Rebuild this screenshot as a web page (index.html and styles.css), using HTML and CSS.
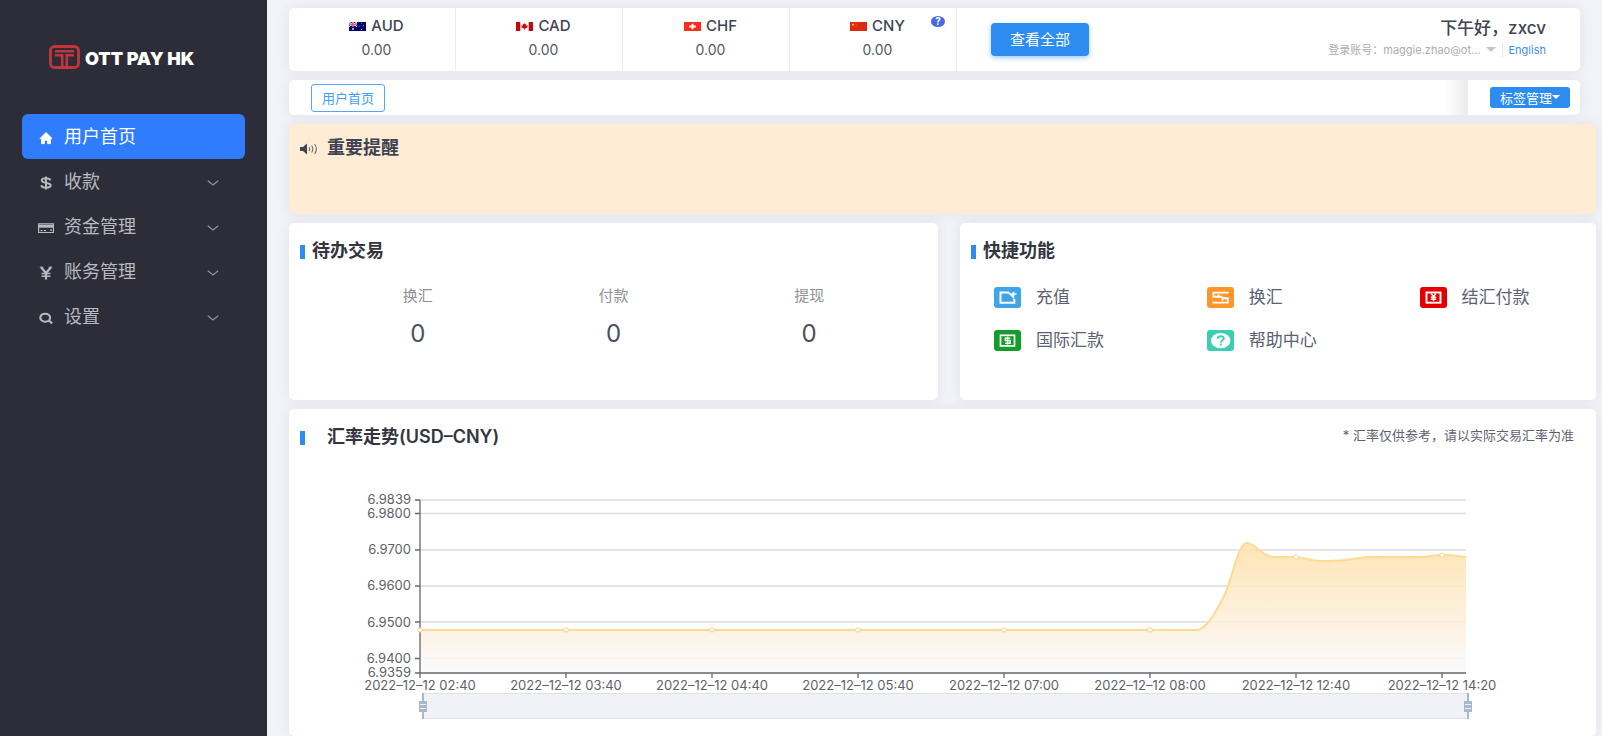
FILE: index.html
```html
<!DOCTYPE html>
<html lang="zh-CN">
<head>
<meta charset="utf-8">
<title>OTT PAY HK</title>
<link rel="stylesheet" href="styles.css">
</head>
<body>
<div class="layout">
  <aside class="sidebar">
    <div class="brand">
      <svg class="brand-mark" viewBox="0 0 31 24" fill="none" stroke="#c2363a">
        <rect x="1.5" y="1.5" width="28" height="21" rx="4" stroke-width="2.8"/>
        <path d="M6 6.200h19M6 10.200h7.200v11.500M25 10.200h-7.200v11.500" stroke-width="2.500"/>
      </svg>
      <span class="brand-name">OTT PAY HK</span>
    </div>
    <nav class="menu">
      <a class="menu-item active" href="#">
        <svg class="menu-icon" viewBox="0 0 16 14" fill="currentColor"><path d="M8 1.500 14 7.600h-1.600v5H9.600V9.200H6.400v3.400H3.600v-5H2z" stroke="currentColor" stroke-linejoin="round"/></svg>
        <span>用户首页</span>
      </a>
      <a class="menu-item" href="#">
        <svg class="menu-icon" viewBox="0 0 16 14" fill="none" stroke="currentColor" stroke-width="2"><path d="M12.500 4.300C11.800 2.800 10 2.300 8 2.300c-2.500 0-4.200.8-4.200 2.300C3.800 7.800 12.700 6 12.700 9.300c0 1.700-2 2.400-4.700 2.400-2.500 0-4.300-.7-4.800-2.300M8 .5v13"/></svg>
        <span>收款</span>
        <svg class="chevron" viewBox="0 0 12 6"><path d="M.8.8 6 5 11.200.8"/></svg>
      </a>
      <a class="menu-item" href="#">
        <svg class="menu-icon" viewBox="0 0 16 14" fill="none" stroke="currentColor"><path d="M.6 2.800h14.800v8.700H.6zM2.500 9.600h2M6 9.600h2M12 9.200h2" stroke-width="1.200"/><path d="M.6 5.300h14.800" stroke-width="2.800"/></svg>
        <span>资金管理</span>
        <svg class="chevron" viewBox="0 0 12 6"><path d="M.8.8 6 5 11.200.8"/></svg>
      </a>
      <a class="menu-item" href="#">
        <svg class="menu-icon" viewBox="0 0 16 14" fill="none" stroke="currentColor" stroke-width="2.200"><path d="M3 1.200 8 7l5-5.800M8 7v6.500"/><path d="M3.500 7.500h9M3.500 10.300h9" stroke-width="1.500"/><path d="M1.800 1.200h3.500M10.700 1.200h3.500" stroke-width="1"/></svg>
        <span>账务管理</span>
        <svg class="chevron" viewBox="0 0 12 6"><path d="M.8.8 6 5 11.200.8"/></svg>
      </a>
      <a class="menu-item" href="#">
        <svg class="menu-icon" viewBox="0 0 16 14" fill="none" stroke="currentColor" stroke-width="2.100"><ellipse cx="7.200" cy="6.700" rx="4.900" ry="4"/><path d="m10.500 9.200 3.700 3.200"/></svg>
        <span>设置</span>
        <svg class="chevron" viewBox="0 0 12 6"><path d="M.8.8 6 5 11.200.8"/></svg>
      </a>
    </nav>
  </aside>

  <main class="main">
    <header class="card topbar">
      <div class="balance">
        <div class="currency">
          <svg class="flag" viewBox="0 0 17 9"><rect width="17" height="9" fill="#00006a"/><path d="M0 0l8 4.500M8 0 0 4.500" stroke="#fff" stroke-width="1"/><path d="M4 0v4.500M0 2.200h8" stroke="#fff" stroke-width="1.700"/><path d="M4 0v4.500M0 2.200h8" stroke="#e0243a" stroke-width="1"/><g fill="#fff"><circle cx="4" cy="6.900" r=".9"/><circle cx="12.500" cy="1.600" r=".45"/><circle cx="10.800" cy="4" r=".45"/><circle cx="14.500" cy="3.500" r=".45"/><circle cx="12.600" cy="7.400" r=".5"/></g></svg>
          <span>AUD</span>
        </div>
        <div class="amount">0.00</div>
      </div>
      <div class="balance">
        <div class="currency">
          <svg class="flag" viewBox="0 0 17 9"><rect width="17" height="9" fill="#fff"/><path d="M0 0h4.300v9H0zM12.700 0H17v9h-4.300z" fill="#c4080c"/><path d="m8.500 1 .8 1.300.9-.3-.1 1.700 1.700-.4-.4 1.200.5.400-2.300 1.500h-.8V8h-.6V6.400h-.8L5.100 4.900l.5-.4-.4-1.200 1.700.4L6.800 2l.9.3z" fill="#c4080c"/></svg>
          <span>CAD</span>
        </div>
        <div class="amount">0.00</div>
      </div>
      <div class="balance">
        <div class="currency">
          <svg class="flag" viewBox="0 0 17 9"><rect width="17" height="9" fill="#fb2c1d"/><path d="M8.500 1.800v5.400M5.200 4.500h6.600" stroke="#fff" stroke-width="1.900"/></svg>
          <span>CHF</span>
        </div>
        <div class="amount">0.00</div>
      </div>
      <div class="balance">
        <div class="currency">
          <svg class="flag" viewBox="0 0 17 9"><rect width="17" height="9" fill="#de2910"/><path d="m3 1 .4 1.100h1.300l-1 .7.400 1.200L3 3.300l-1.100.7.400-1.200-1-.7h1.300z" fill="#ffd800"/><g fill="#ffb000"><circle cx="5.900" cy="1" r=".35"/><circle cx="6.800" cy="1.900" r=".35"/><circle cx="6.800" cy="3.100" r=".35"/><circle cx="5.900" cy="4" r=".35"/></g></svg>
          <span>CNY</span>
        </div>
        <div class="amount">0.00</div>
        <button class="help" type="button" aria-label="帮助">?</button>
      </div>
      <button class="view-all" type="button">查看全部</button>
      <div class="user">
        <div class="greeting">下午好，zxcv</div>
        <div class="account">
          <span>登录账号：</span>
          <span class="email">maggie.zhao@ot...</span>
          <i class="caret"></i>
          <a class="lang" href="#">English</a>
        </div>
      </div>
    </header>

    <div class="card tabs">
      <button class="tab" type="button">用户首页</button>
      <div class="tabs-fade"></div>
      <div class="tabs-side">
        <button class="tab-manage" type="button">标签管理<i class="caret-small"></i></button>
      </div>
    </div>

    <section class="card notice">
      <svg class="speaker" viewBox="0 0 18 12"><path d="M0 4h3l4-3.500v11L3 8H0z" fill="#3f4354"/><path d="M9 4q1.300 2 0 4M11.600 2.500q2.400 3.500 0 7M14.600 1q3.500 5 0 10" fill="none" stroke="#6b6b70" stroke-width="1.100"/></svg>
      <h2>重要提醒</h2>
    </section>

    <div class="panels">
      <section class="card panel">
        <h2 class="panel-title">待办交易</h2>
        <div class="todos">
          <div class="todo"><span>换汇</span><strong>0</strong></div>
          <div class="todo"><span>付款</span><strong>0</strong></div>
          <div class="todo"><span>提现</span><strong>0</strong></div>
        </div>
      </section>
      <section class="card panel">
        <h2 class="panel-title">快捷功能</h2>
        <div class="quick">
          <a href="#"><svg viewBox="0 0 27 21"><rect width="27" height="21" rx="3" fill="#3fa5ea"/><path d="M14.500 5.500H6.500v10.300h13.800v-4" fill="none" stroke="#fff" stroke-width="2"/><path d="m14 5 6 6M19.500 4.800v4.700M16.500 7h6" fill="none" stroke="#fff" stroke-width="1.700"/></svg>充值</a>
          <a href="#"><svg viewBox="0 0 27 21"><rect width="27" height="21" rx="3" fill="#fd952c"/><path d="M21.500 5.600H6.500v4.200h9M11.500 7.500v2.500M5.500 15.600h15.300v-4.300h-6M15.500 11.500v2" fill="none" stroke="#fff" stroke-width="1.900"/></svg>换汇</a>
          <a href="#"><svg viewBox="0 0 27 21"><rect width="27" height="21" rx="3" fill="#e50000"/><rect x="6.500" y="5.500" width="14" height="10.200" fill="none" stroke="#fff" stroke-width="1.900"/><path d="m11 6.500 2.500 3 2.500-3M13.500 9v5M10.800 10.300h5.400M10.800 12.300h5.400" fill="none" stroke="#fff" stroke-width="1.400"/></svg>结汇付款</a>
          <a href="#"><svg viewBox="0 0 27 21"><rect width="27" height="21" rx="3" fill="#159d2b"/><rect x="6.500" y="5.300" width="14" height="10.600" fill="none" stroke="#fff" stroke-width="1.700"/><path d="M16.300 8.200h-5v2.300h4.800v2.800h-5M13.600 6.600v8" fill="none" stroke="#fff" stroke-width="1.400"/></svg>国际汇款</a>
          <a href="#"><svg viewBox="0 0 27 21"><rect width="27" height="21" rx="3" fill="#3acfb2"/><ellipse cx="13.700" cy="10.700" rx="9.700" ry="7.600" fill="#fff"/><path d="M10.700 8.700c0-3.200 6.100-3.200 6.100-.2 0 1.700-3 1.800-3 3.900M13.800 13.600v1.900" fill="none" stroke="#3acfb2" stroke-width="1.900"/></svg>帮助中心</a>
        </div>
      </section>
    </div>

    <section class="card trend">
      <div class="trend-head">
        <h2 class="panel-title spaced">汇率走势(USD–CNY)</h2>
        <p class="trend-note">* 汇率仅供参考，请以实际交易汇率为准</p>
      </div>
      <svg class="chart" viewBox="0 0 1307 256" role="img" aria-label="USD-CNY">
        <defs>
          <linearGradient id="area" gradientUnits="userSpaceOnUse" x1="0" y1="62" x2="0" y2="193">
            <stop offset="0" stop-color="#fee1a9"/>
            <stop offset=".62" stop-color="#fdefdd"/>
            <stop offset="1" stop-color="#f9fafc"/>
          </linearGradient>
        </defs>
        <path class="grid" d="M131 20h1046M131 33.500h1046M131 70h1046M131 106h1046M131 142h1046M131 178.500h1046"/>
        <path d="M131 150H909C919 147 927 132 936 114C944 96 949 63 958 63C966 63 974 77 984 77L1006 77C1018 78 1022 81 1031 81C1041 81 1048 81 1056 80C1065 79 1072 77 1081 77H1131C1139 77 1145 75 1153 75C1162 75 1168 76 1177 77V193H131z" fill="url(#area)" fill-opacity=".88"/>
        <path class="axis" d="M131 20V193M126 20h5M126 33.500h5M126 70h5M126 106h5M126 142h5M126 178.500h5M126 193H1177M131 193v5M277 193v5M423 193v5M569 193v5M715 193v5M861 193v5M1007 193v5M1153 193v5"/>
        <path class="line" d="M131 150H909C919 147 927 132 936 114C944 96 949 63 958 63C966 63 974 77 984 77L1006 77C1018 78 1022 81 1031 81C1041 81 1048 81 1056 80C1065 79 1072 77 1081 77H1131C1139 77 1145 75 1153 75C1162 75 1168 76 1177 77"/>
        <g class="dots">
          <ellipse cx="131" cy="150" rx="2.500" ry="2"/><ellipse cx="277" cy="150" rx="2.500" ry="2"/><ellipse cx="423" cy="150" rx="2.500" ry="2"/><ellipse cx="569" cy="150" rx="2.500" ry="2"/><ellipse cx="715" cy="150" rx="2.500" ry="2"/><ellipse cx="861" cy="150" rx="2.500" ry="2"/><ellipse cx="1007" cy="77" rx="2.500" ry="2"/><ellipse cx="1153" cy="75" rx="2.500" ry="2"/>
        </g>
        <g class="labels end">
          <text x="122" y="24">6.9839</text><text x="122" y="38">6.9800</text><text x="122" y="74">6.9700</text><text x="122" y="110">6.9600</text><text x="122" y="147">6.9500</text><text x="122" y="183">6.9400</text><text x="122" y="197">6.9359</text>
        </g>
        <g class="labels mid">
          <text x="131" y="210">2022–12–12 02:40</text><text x="277" y="210">2022–12–12 03:40</text><text x="423" y="210">2022–12–12 04:40</text><text x="569" y="210">2022–12–12 05:40</text><text x="715" y="210">2022–12–12 07:00</text><text x="861" y="210">2022–12–12 08:00</text><text x="1007" y="210">2022–12–12 12:40</text><text x="1153" y="210">2022–12–12 14:20</text>
        </g>
        <rect x="133.500" y="213.500" width="1046" height="25" fill="#f1f2f7" stroke="#dfe1e6"/>
        <g class="handle">
          <path d="M134 213v26M1179 213v26"/>
          <path d="M130 221h8v11h-8zM1175 221h8v11h-8z" fill="#a7b7cc" stroke="none"/>
          <path d="M131 224.500h6M131 228.500h6M1176 224.500h6M1176 228.500h6" stroke="#eef2f8" stroke-width="1"/>
        </g>
      </svg>
    </section>
  </main>
</div>
</body>
</html>
```
FILE: styles.css
```css
* { box-sizing: border-box; }
body {
  margin: 0;
  background: #f2f3f8;
  color: #3f4354;
  font-family: Inter, "Noto Sans CJK SC", sans-serif;
  font-size: 14px;
}
h2, p { margin: 0; }
a { color: inherit; text-decoration: none; }
button { font-family: inherit; border: 0; padding: 0; cursor: pointer; }
svg { display: block; flex: none; }

.layout { display: flex; height: 100vh; overflow: hidden; }

.sidebar { flex: none; width: 267px; padding: 44px 22px; background: #2d2d39; }
.brand { display: flex; align-items: center; gap: 5px; height: 26px; padding-left: 27px; }
.brand-mark { width: 31px; height: 24px; }
.brand-name { color: #fff; font-size: 18px; font-weight: 900; line-height: 24px; padding-top: 4px; white-space: nowrap; }
.menu { display: flex; flex-direction: column; margin-top: 44px; }
.menu-item {
  display: flex;
  align-items: center;
  gap: 10px;
  height: 45px;
  padding: 0 26px 0 16px;
  border-radius: 6px;
  color: #b9b9bf;
  font-size: 18px;
  line-height: 24px;
}
.menu-item.active { background: #307cff; color: #fff; }
.menu-icon { width: 16px; height: 14px; margin-top: 3px; }
.chevron { width: 12px; height: 6px; margin: 2px 0 0 auto; fill: none; stroke: #92929b; stroke-width: 1.300; }

.main { flex: 1; min-width: 0; display: flex; flex-direction: column; gap: 9px; padding: 8px 6px 0 22px; }
.card { background: #fff; border-radius: 5px; box-shadow: 0 0 12px rgba(60, 60, 70, .09); }

.topbar { display: flex; align-items: center; height: 63px; margin-right: 16px; }
.balance {
  position: relative;
  display: flex;
  flex-direction: column;
  align-items: center;
  gap: 4px;
  width: 167px;
  height: 100%;
  padding: 8px 0 0 9px;
  border-right: 1px solid #ebecef;
}
.currency { display: flex; align-items: center; gap: 5px; font-size: 15px; font-weight: 500; line-height: 20px; }
.flag { width: 17px; height: 9px; }
.amount { font-size: 14px; line-height: 20px; color: #555865; }
.help {
  position: absolute;
  top: 8px;
  right: 11px;
  width: 14px;
  height: 11px;
  border-radius: 50%;
  background: #4769e8;
  color: #fff;
  font-size: 10px;
  font-weight: 700;
  line-height: 11px;
}
.view-all {
  width: 98px;
  height: 33px;
  margin-left: 34px;
  padding-bottom: 2px;
  border-radius: 4px;
  background: #2d8cf0;
  box-shadow: 0 2px 5px rgba(45, 140, 240, .45);
  color: #fff;
  font-size: 15px;
}
.user { margin-left: auto; padding: 0 34px 4px 0; text-align: right; }
.greeting { font-size: 17px; font-weight: 500; line-height: 24px; }
.account { display: flex; align-items: center; justify-content: flex-end; line-height: 20px; font-size: 11px; color: #adadb2; }
.caret { margin: 0 6px 0 5px; border: 5px solid transparent; border-top-color: #c4c4c8; border-bottom: 0; }
.lang { padding-left: 6px; border-left: 1px solid #e4e4e8; line-height: 14px; color: #3d91f2; }

.tabs { display: flex; align-items: center; height: 35px; margin-right: 16px; padding-left: 22px; overflow: hidden; }
.tab { width: 74px; height: 28px; border: 1px solid #59a6f5; border-radius: 3px; background: #fff; color: #409eff; font-size: 13px; }
.tabs-fade { width: 24px; height: 100%; margin-left: auto; background: linear-gradient(90deg, #fff, #ebebec); }
.tabs-side { display: flex; align-items: center; height: 100%; padding: 0 10px 0 22px; }
.tab-manage { display: flex; align-items: center; justify-content: center; width: 80px; height: 21px; padding-bottom: 1px; border-radius: 3px; background: #2d8cf0; color: #fff; font-size: 13px; }
.caret-small { border: 4px solid transparent; border-top-color: #fff; border-bottom: 0; }

.notice { display: flex; gap: 9px; height: 90px; padding: 12px 11px; background: #feedd4; }
.notice h2 { font-size: 18px; font-weight: 700; line-height: 24px; }
.speaker { width: 18px; height: 12px; margin-top: 7px; }

.panels { display: grid; grid-template-columns: minmax(0, 649fr) minmax(0, 636fr); gap: 22px; }
.panel { height: 177px; padding: 16px 11px; }
.panel-title { display: flex; align-items: center; gap: 7px; font-size: 18px; font-weight: 600; line-height: 24px; color: #34353f; }
.panel-title::before { content: ""; width: 5px; height: 14px; margin-top: 2px; background: #2d8cf0; }
.panel-title.spaced { gap: 22px; }
.todos { display: grid; grid-template-columns: repeat(3, 1fr); margin-top: 21px; padding: 0 20px; text-align: center; }
.todo { display: flex; flex-direction: column; gap: 13px; }
.todo span { font-size: 15px; line-height: 24px; color: #8f9094; }
.todo strong { font-size: 24px; font-weight: 400; line-height: 26px; color: #4b5060; }
.quick { display: grid; grid-template-columns: 36% 36% 28%; row-gap: 19px; margin-top: 22px; padding-left: 23px; }
.quick a { display: flex; align-items: center; gap: 15px; font-size: 17px; line-height: 24px; color: #5c6070; white-space: nowrap; }
.quick svg { width: 27px; height: 21px; }

.trend { flex: 1; padding-top: 16px; }
.trend-head { display: flex; align-items: flex-start; justify-content: space-between; padding: 0 22px 0 11px; }
.trend-note { font-size: 13px; line-height: 20px; color: #5f6270; }
.chart { width: 100%; height: auto; margin-top: 31px; }
.grid { stroke: #dddde0; stroke-width: 1.500; }
.axis { fill: none; stroke: #66676c; stroke-width: 1.300; }
.line { fill: none; stroke: #fedb93; stroke-width: 2; }
.dots { fill: #fff; stroke: #f3d19a; }
.labels { font-size: 13px; fill: #606167; }
.labels.end { text-anchor: end; }
.labels.mid { text-anchor: middle; }
.handle { fill: none; stroke: #a7b7cc; stroke-width: 2; }
```
